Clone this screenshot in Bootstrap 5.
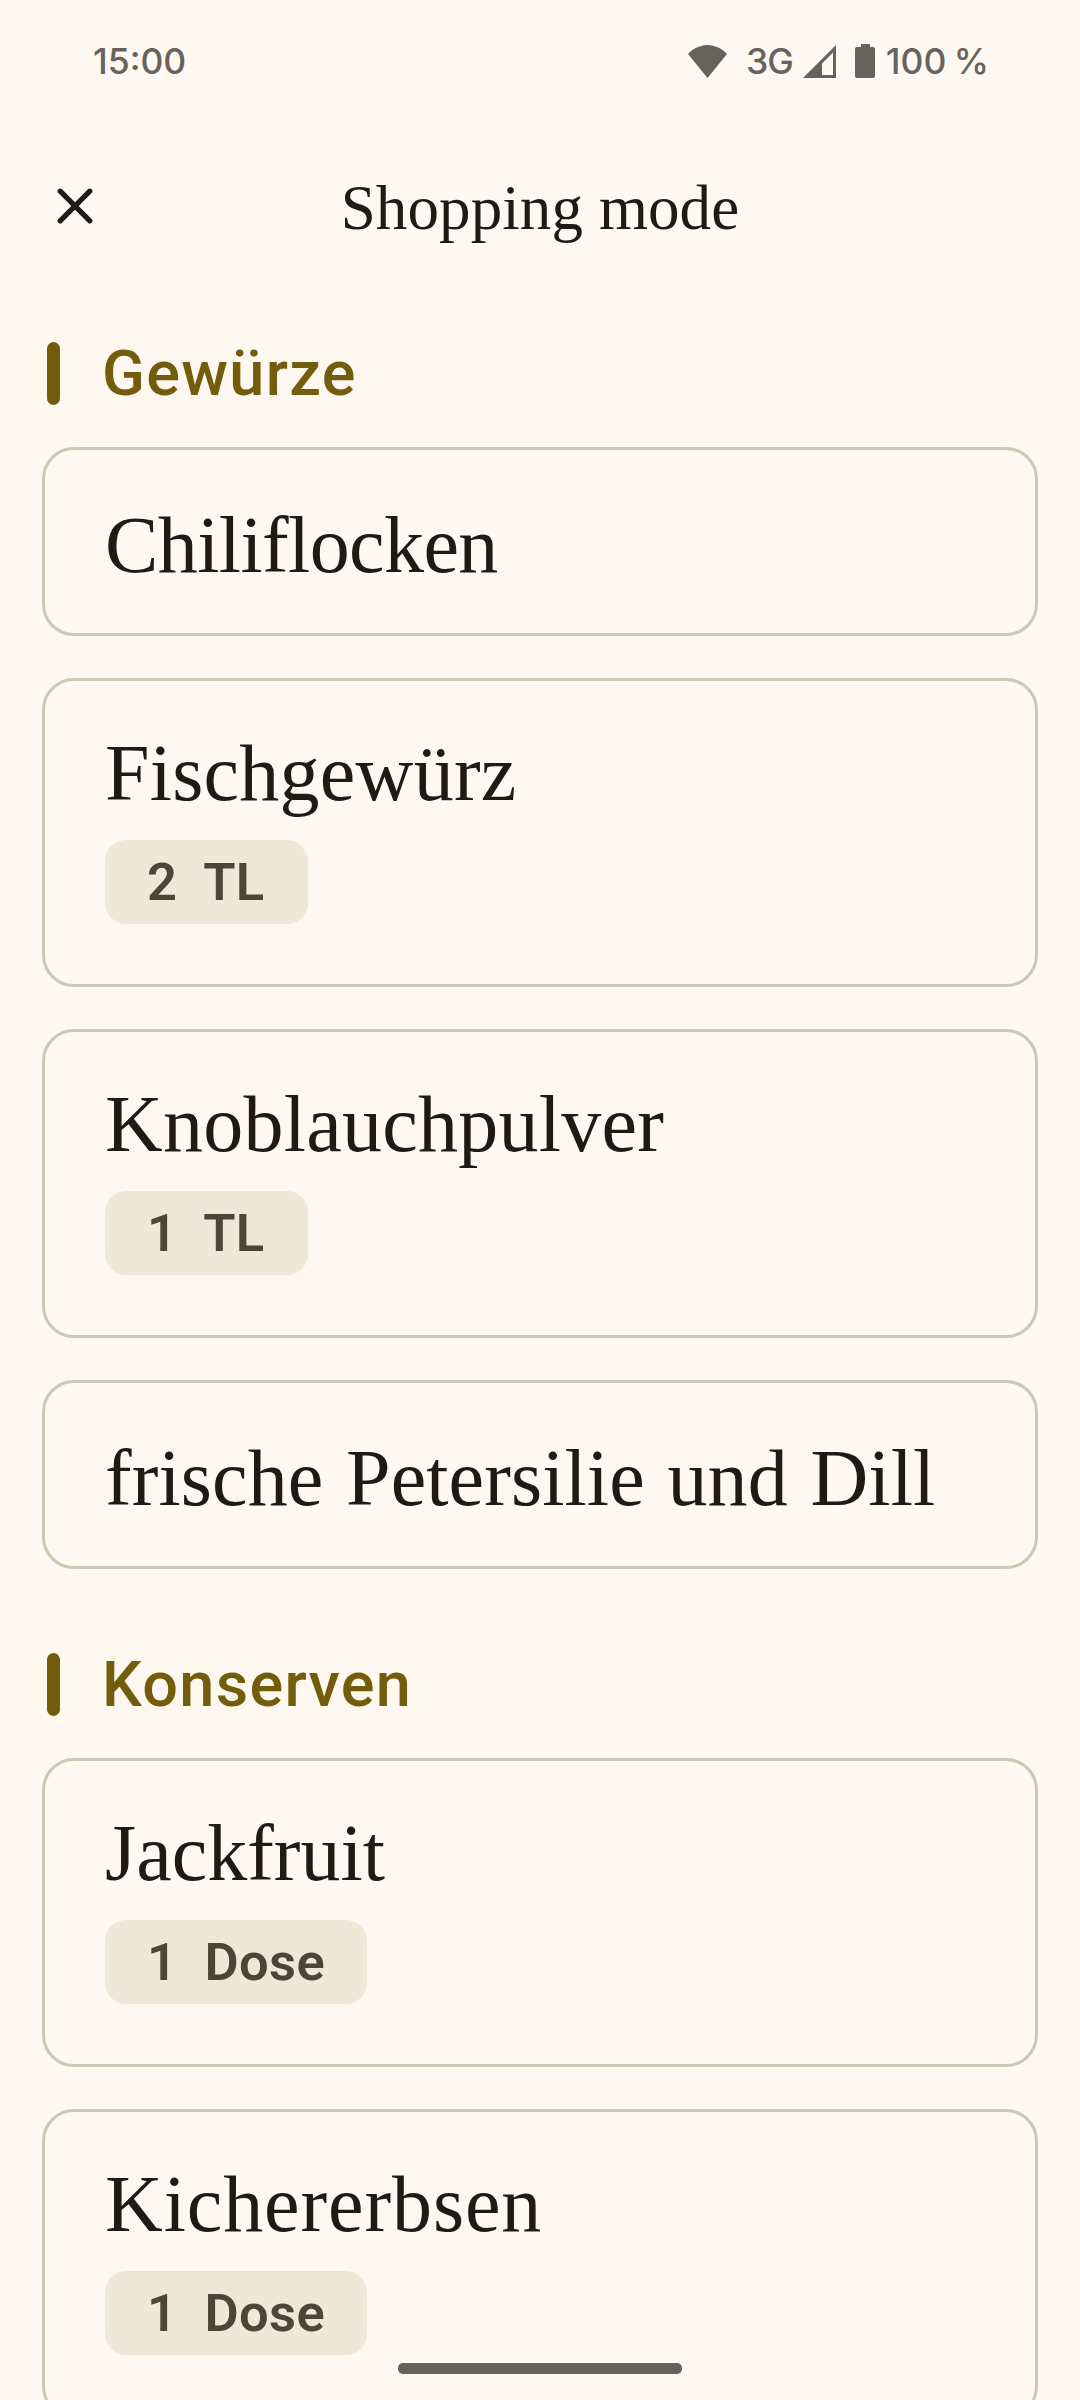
<!DOCTYPE html>
<html lang="de">
<head>
<meta charset="utf-8">
<meta name="viewport" content="width=device-width, initial-scale=1">
<title>Shopping mode</title>
<link href="https://cdn.jsdelivr.net/npm/bootstrap@5.3.0/dist/css/bootstrap.min.css" rel="stylesheet">
<style>
  html, body { height: 2400px; overflow: hidden; }
  body { background: #fff8f1; color: #1e1b13; font-family: Roboto, "Liberation Sans", sans-serif; }
  .screen { width: 1080px; height: 2400px; }
  .status-bar { height: 122px; padding: 0 91px 0 93px; color: #66625e; font: 500 35.5px/1 Inter, Roboto, sans-serif; }
  .status-bar svg, .close-btn svg { display: block; fill: currentColor; flex: none; }
  .status-bar span { padding-top: 2px; }
  .clock { letter-spacing: 0; }
  .network { margin: 0 10px 0 19px; letter-spacing: -1px; }
  .charge { margin-left: 8px; letter-spacing: .1px; word-spacing: -2.5px; }
  .app-bar { height: 167px; padding: 0 42px; }
  .close-btn { width: 65px; height: 65px; color: inherit; border: 0; }
  .serif { font-family: "Liberation Serif", serif; font-weight: 400; }
  .app-title { font-size: 63px; line-height: 80px; padding-top: 4px; letter-spacing: .1px; }
  .shop-list { padding: 53px 42px 0; }
  .group-title { gap: 42px; padding-left: 5px; margin-bottom: 42px; color: #735c0c; font-size: 63px; line-height: 63px; font-weight: 500; letter-spacing: 1.3px; }
  .group-title::before { content: ""; width: 13px; height: 63px; border-radius: 7px; background: currentColor; }
  .items { gap: 42px; margin-bottom: 84px; }
  .item { border: 3px solid #cfc6b4; border-radius: 32px; background: none; height: 309px; padding: 47px 60px 0; }
  .item-plain { height: 189px; padding-top: 50px; }
  .item-name { font-size: 80px; line-height: 90px; color: #1e1b13; white-space: nowrap; letter-spacing: .25px; }
  .tight { letter-spacing: -.6px; }
  .even { letter-spacing: 0; }
  .wide { letter-spacing: .9px; }
  .phrase { letter-spacing: .1px; word-spacing: 2.6px; }
  .amount { min-width: 203px; margin-top: 22px; height: 84px; padding: 0 42px; border-radius: 21px; background: #f0e7d8; color: #4c4637; font-size: 52.5px; line-height: 84px; font-weight: 600; white-space: pre; letter-spacing: .3px; word-spacing: .3px; }
  .home-handle { width: 284px; height: 11px; bottom: 26px; border-radius: 5px; background: #66625e; }
</style>
</head>
<body>
<div class="screen position-relative overflow-hidden">
  <div class="status-bar d-flex align-items-center justify-content-between">
    <span class="clock">15:00</span>
    <div class="d-flex align-items-center">
      <svg width="39" height="33" viewBox="0 0 39 33"><path d="M0 9C5 3.500 12 0 19.500 0S34 3.500 39 9L19.500 33Z"/></svg>
      <span class="network">3G</span>
      <svg width="33" height="33" viewBox="0 0 33 33"><path fill-rule="evenodd" d="M33 0V33H0ZM30 7.500L19 18.500V30H30Z"/></svg>
      <svg class="ms-3" width="26" height="34" viewBox="-3 0 26 34"><path d="M6 0h9v3h3a2 2 0 0 1 2 2v27a2 2 0 0 1-2 2H2a2 2 0 0 1-2-2V5a2 2 0 0 1 2-2h4Z"/></svg>
      <span class="charge">100 %</span>
    </div>
  </div>

  <header class="app-bar d-flex align-items-center">
    <button class="close-btn btn p-0 d-flex align-items-center justify-content-center" aria-label="Close">
      <svg width="36" height="36" viewBox="0 0 36 36"><path d="M3.200 3.200L32.800 32.800M32.800 3.200L3.200 32.800" stroke="currentColor" stroke-width="5.200" stroke-linecap="round"/></svg>
    </button>
    <h1 class="app-title serif flex-grow-1 text-center mb-0">Shopping mode</h1>
    <span class="close-btn"></span>
  </header>

  <main class="shop-list">
    <h2 class="group-title d-flex align-items-center">Gewürze</h2>
    <div class="items d-flex flex-column">
      <div class="item item-plain card"><div class="item-name serif tight">Chiliflocken</div></div>
      <div class="item card align-items-start"><div class="item-name serif">Fischgewürz</div><span class="amount">2  TL</span></div>
      <div class="item card align-items-start"><div class="item-name serif">Knoblauchpulver</div><span class="amount">1  TL</span></div>
      <div class="item item-plain card"><div class="item-name serif phrase">frische Petersilie und Dill</div></div>
    </div>
    <h2 class="group-title d-flex align-items-center">Konserven</h2>
    <div class="items d-flex flex-column">
      <div class="item card align-items-start"><div class="item-name serif even">Jackfruit</div><span class="amount">1  Dose</span></div>
      <div class="item card align-items-start"><div class="item-name serif wide">Kichererbsen</div><span class="amount">1  Dose</span></div>
    </div>
  </main>
  <div class="home-handle position-absolute start-50 translate-middle-x"></div>
</div>
<script src="https://cdn.jsdelivr.net/npm/bootstrap@5.3.0/dist/js/bootstrap.bundle.min.js"></script>
</body>
</html>
